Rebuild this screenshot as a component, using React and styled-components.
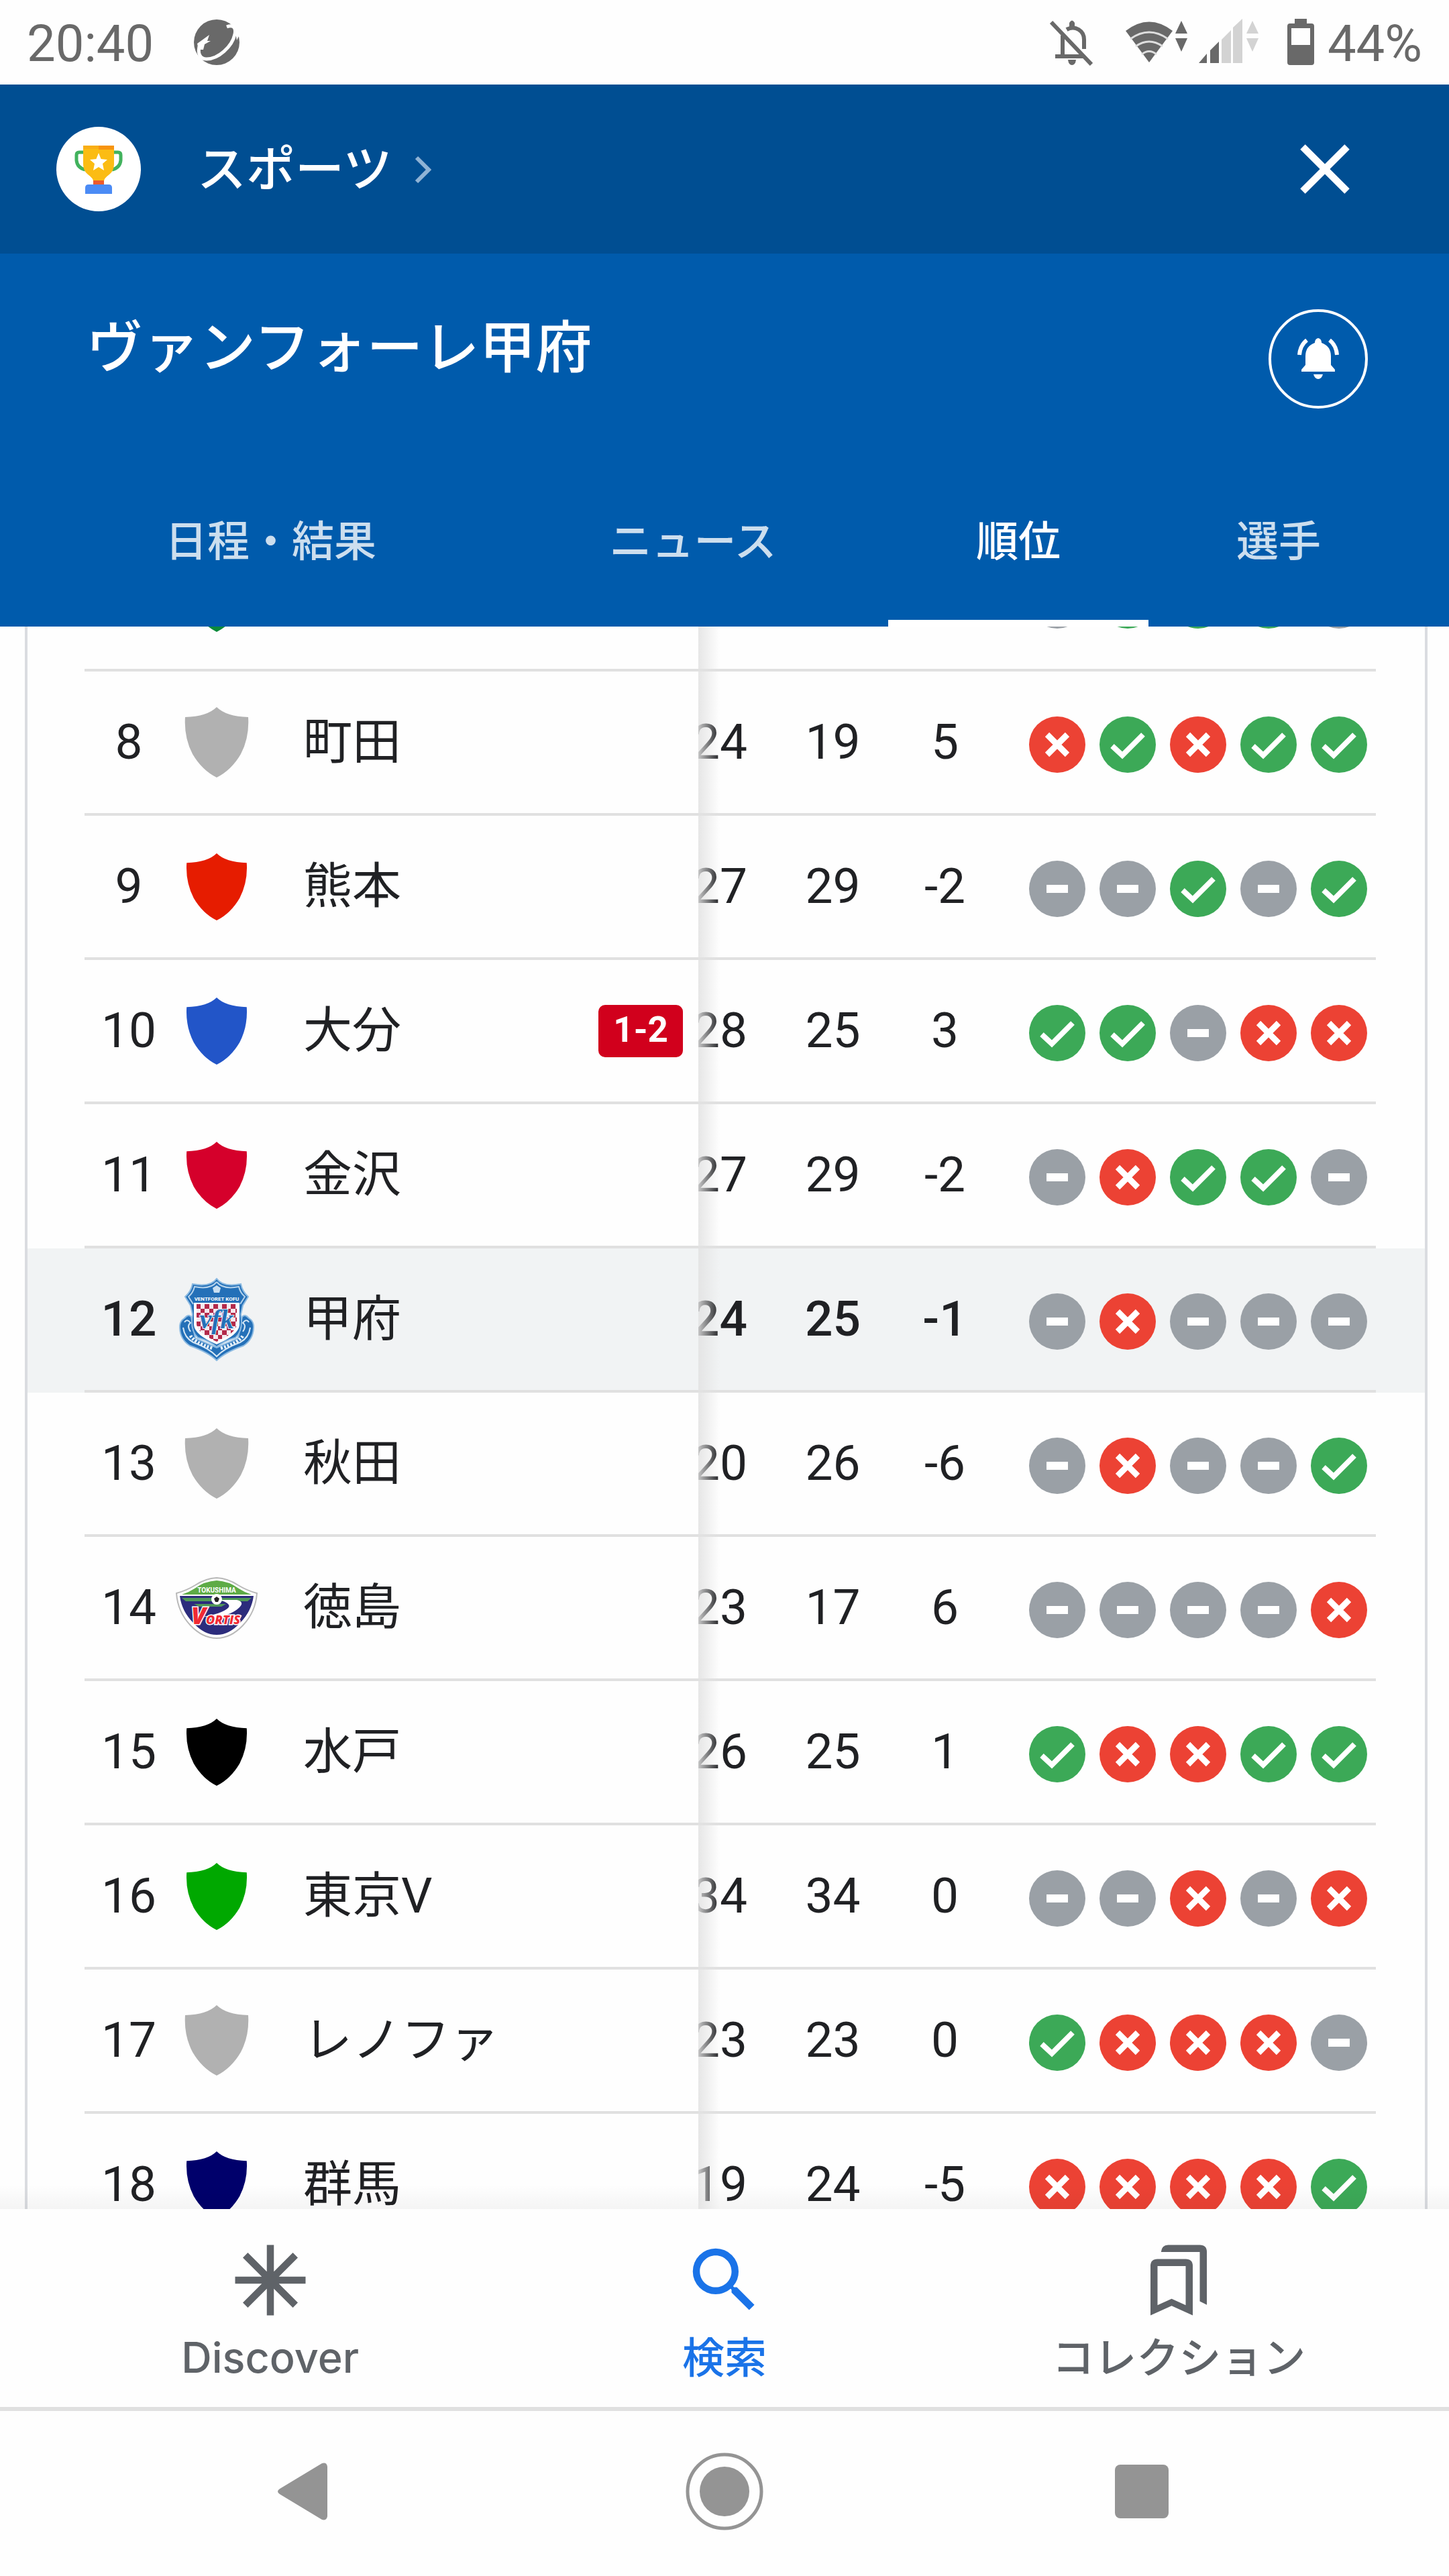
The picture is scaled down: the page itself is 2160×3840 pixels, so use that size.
import styled, { createGlobalStyle } from "styled-components";
import { MdClose, MdSearch } from "react-icons/md";

const standings = [
  { shield: "#0b8a3a", form: "DWWWD" },
  { rank: 8, name: "町田", shield: "#b1b1b1", large: true, gf: 24, ga: 19, gd: 5, form: "LWLWW" },
  { rank: 9, name: "熊本", shield: "#e61c00", gf: 27, ga: 29, gd: -2, form: "DDWDW" },
  { rank: 10, name: "大分", shield: "#2255c8", gf: 28, ga: 25, gd: 3, form: "WWDLL", live: "1-2" },
  { rank: 11, name: "金沢", shield: "#d5002b", gf: 27, ga: 29, gd: -2, form: "DLWWD" },
  { rank: 12, name: "甲府", crest: "kofu", gf: 24, ga: 25, gd: -1, form: "DLDDD", current: true },
  { rank: 13, name: "秋田", shield: "#b1b1b1", large: true, gf: 20, ga: 26, gd: -6, form: "DLDDW" },
  { rank: 14, name: "徳島", crest: "tokushima", gf: 23, ga: 17, gd: 6, form: "DDDDL" },
  { rank: 15, name: "水戸", shield: "#000000", gf: 26, ga: 25, gd: 1, form: "WLLWW" },
  { rank: 16, name: "東京V", shield: "#00a800", gf: 34, ga: 34, gd: 0, form: "DDLDL" },
  { rank: 17, name: "レノファ", shield: "#b1b1b1", large: true, gf: 23, ga: 23, gd: 0, form: "WLLLD" },
  { rank: 18, name: "群馬", shield: "#00006b", gf: 19, ga: 24, gd: -5, form: "LLLLW" },
];

const tabs = [
  { label: "日程・結果", grow: 677 },
  { label: "ニュース", grow: 582 },
  { label: "順位", grow: 388, active: true },
  { label: "選手", grow: 388 },
];

export default function App() {
  return (
    <>
      <GlobalStyle />
      <StyledScreen>
        <StatusBar />
        <StyledAppBar>
          <TrophyIcon />
          <StyledSportsLink href="#sports">
            スポーツ
            <svg width="28" height="42" viewBox="0 0 28 42" fill="none">
              <path d="M4 3 L22 21 L4 39" stroke="#8fb3d5" strokeWidth="6" />
            </svg>
          </StyledSportsLink>
          <StyledIconButton aria-label="閉じる">
            <MdClose size={126} />
          </StyledIconButton>
        </StyledAppBar>
        <StyledHero>
          <StyledHeroTop>
            <StyledTitle>ヴァンフォーレ甲府</StyledTitle>
            <StyledBellButton aria-label="通知">
              <BellIcon />
            </StyledBellButton>
          </StyledHeroTop>
          <StyledTabs>
            {tabs.map((tab) => (
              <StyledTab key={tab.label} $grow={tab.grow} $active={tab.active}>
                {tab.label}
              </StyledTab>
            ))}
          </StyledTabs>
        </StyledHero>
        <StyledContent>
          <StyledCard>
            <StyledTable>
              <tbody>
                {standings.map((team, index) => (
                  <TeamRow key={index} team={team} />
                ))}
              </tbody>
            </StyledTable>
          </StyledCard>
        </StyledContent>
        <StyledBottomNav>
          <StyledNavLink href="#discover">
            <DiscoverIcon />
            Discover
          </StyledNavLink>
          <StyledNavLink href="#search" $active>
            <MdSearch size={126} />
            検索
          </StyledNavLink>
          <StyledNavLink href="#collections">
            <CollectionsIcon />
            コレクション
          </StyledNavLink>
        </StyledBottomNav>
        <SystemNav />
      </StyledScreen>
    </>
  );
}

function TeamRow({ team }) {
  return (
    <StyledRow $current={team.current}>
      <StyledCell>{team.rank}</StyledCell>
      <StyledTeamCell scope="row">
        <StyledLogo>
          {team.crest === "kofu" && <KofuCrest />}
          {team.crest === "tokushima" && <TokushimaCrest />}
          {team.shield && <Shield color={team.shield} large={team.large} />}
        </StyledLogo>
        <StyledName>{team.name}</StyledName>
        {team.live && <StyledLiveScore>{team.live}</StyledLiveScore>}
      </StyledTeamCell>
      <StyledScrolledCell>{team.gf}</StyledScrolledCell>
      <StyledCell>{team.ga}</StyledCell>
      <StyledCell>{team.gd}</StyledCell>
      <StyledFormCell>
        {team.form.split("").map((result, index) => (
          <FormIcon key={index} result={result} />
        ))}
      </StyledFormCell>
    </StyledRow>
  );
}

function StatusBar() {
  return (
    <StyledStatusBar>
      <StyledStatusText>20:40</StyledStatusText>
      <StyledStatusIcon width="70" height="70" viewBox="0 0 70 70" $before={59}>
        <circle cx="35" cy="35" r="34" fill="#696969" />
        <path
          d="M50 12 C60 8 64 14 62 23 C58 42 37 60 20 60 C9 60 6 50 10 38"
          fill="none"
          stroke="#fff"
          strokeWidth="5"
        />
        <path d="M6 37 L24 24 L21 33 L26 33 L17 38 L15 46 L8 46 Z" fill="#fff" />
        <path d="M56 6 L70 22 L65 32 L62 16 Z" fill="#fff" />
      </StyledStatusIcon>
      <StyledSpacer />
      <StyledStatusIcon width="64" height="70" viewBox="0 0 64 70" fill="none" stroke="#696969" strokeWidth="6" $before={0}>
        <path d="M25 16 C38 9 51 18 51 31 V45" />
        <path d="M19 25 V54 M8 56 H52 M2 5 L62 68" />
        <path d="M29 13 V6 Q33 -1 37 6 V13 Z M27 61 H39 Q38 69 33 69 Q28 69 27 61 Z" fill="#696969" stroke="none" />
      </StyledStatusIcon>
      <StyledStatusIcon width="92" height="70" viewBox="0 0 92 70" fill="none" $before={49}>
        <path d="M35 65 L0 18 Q35 -9 70 18 Z" fill="#696969" />
        <path
          d="M7 30 Q35 10 63 30 M15 41 Q35 27 55 41 M24 53 Q35 44 46 53"
          stroke="#dedede"
          strokeWidth="3"
        />
        <path d="M83 3 L92 22 H74 Z M83 49 L92 29 H74 Z" fill="#696969" />
      </StyledStatusIcon>
      <StyledStatusIcon width="90" height="70" viewBox="0 0 90 70" $before={17}>
        <path d="M0 66 L12 52 V66 Z M17 47 L30 34 V66 H17 Z" fill="#696969" />
        <path
          d="M34 31 L48 17 V66 H34 Z M51 13 L65 0 V66 H51 Z M80 3 L89 22 H71 Z M80 49 L89 29 H71 Z"
          fill="#d3d3d3"
        />
      </StyledStatusIcon>
      <StyledStatusIcon width="40" height="70" viewBox="0 0 40 70" $before={42}>
        <path
          d="M11 0 H29 V7 H36 Q40 7 40 11 V65 Q40 69 36 69 H4 Q0 69 0 65 V11 Q0 7 4 7 H11 Z M6 14 V39 H34 V14 Z"
          fill="#696969"
          fillRule="evenodd"
        />
      </StyledStatusIcon>
      <StyledBattery>44%</StyledBattery>
    </StyledStatusBar>
  );
}

function TrophyIcon() {
  return (
    <svg width="126" height="126" viewBox="0 0 126 126">
      <circle cx="63" cy="63" r="63" fill="#fff" />
      <path
        d="M42 38 H34 Q30 38 30 42 V50 Q31 61 43 64 M84 38 H92 Q96 38 96 42 V50 Q95 61 83 64"
        fill="none"
        stroke="#41b25d"
        strokeWidth="5"
      />
      <path d="M40 28 H86 V55 Q86 66 79 71 Q71 77 71 81 V87 H55 V81 Q55 77 47 71 Q40 66 40 55 Z" fill="#fbbc13" />
      <path d="M40 28 H63 V33 H40 Z" fill="#f9ae16" />
      <path d="M63 28 H86 V34 H63 Z" fill="#f79410" />
      <path d="M55 80 H71 V87 H55 Z" fill="#ee5a2c" />
      <path d="M48 86 H78 Q83 86 83 91 V100 H43 V91 Q43 86 48 86 Z" fill="#4b8bf5" />
      <path
        d="M63 39 L66.600 48 L76 49 L69 55 L71 65 L63 60 L55 65 L57 55 L50 49 L59.400 48 Z"
        fill="#fff"
      />
    </svg>
  );
}

function BellIcon() {
  return (
    <svg width="64" height="62" viewBox="0 0 64 62" fill="#fff">
      <path d="M32 0 Q37 1 37 7 Q51 12 51 27 V40 L57 47 V50 H7 V47 L13 40 V27 Q13 12 27 7 Q27 1 32 0 Z" />
      <path d="M25 54 H39 Q37 61 32 61 Q27 61 25 54 Z" />
      <path d="M15 3 Q5 11 4 25 M49 3 Q59 11 60 25" fill="none" stroke="#fff" strokeWidth="6" />
    </svg>
  );
}

function DiscoverIcon() {
  return (
    <svg width="126" height="126" viewBox="0 0 24 24">
      <path
        d="M12 2 V22 M2 12 H22 M4.900 4.900 L19.100 19.100 M19.100 4.900 L4.900 19.100"
        stroke="currentColor"
        strokeWidth="2"
      />
    </svg>
  );
}

function CollectionsIcon() {
  return (
    <svg width="126" height="126" viewBox="0 0 24 24" fill="currentColor">
      <path
        d="M6 6 H14 Q16 6 16 8 V22 L10 19.300 L4 22 V8 Q4 6 6 6 Z M6 8 V19.100 L10 17.300 L14 19.100 V8 Z"
        fillRule="evenodd"
      />
      <path d="M7 4 Q7.200 2 9 2 H18 Q20 2 20 4 V19 L18 18 V4 Z" />
    </svg>
  );
}

function Shield({ color, large }) {
  return (
    <svg width={large ? 96 : 92} height={large ? 105 : 100} viewBox="0 0 96 105">
      <path
        d="M48 0 Q62 14 95 15 Q97 45 84 70 Q70 94 48 105 Q26 94 12 70 Q-1 45 1 15 Q34 14 48 0 Z"
        fill={color}
      />
    </svg>
  );
}

function KofuCrest() {
  return (
    <svg width="112" height="124" viewBox="0 0 112 124">
      <defs>
        <pattern id="checks" x="25" y="39" width="13" height="13" patternUnits="userSpaceOnUse">
          <rect width="13" height="13" fill="#f4e9ee" />
          <rect width="7" height="7" fill="#b32a4b" />
          <rect x="7" y="7" width="6" height="6" fill="#b32a4b" />
        </pattern>
      </defs>
      <path
        d="M18 58 Q14 53 8 60 Q0 65 1 75 Q2 92 16 101 Q44 111 56 123 Q68 111 96 101 Q110 92 111 75 Q112 65 104 60 Q98 53 94 58 L88 90 L56 104 L24 90 Z"
        fill="#2470b8"
        stroke="#8dbbe2"
        strokeWidth="2"
      />
      <path
        d="M6 74 Q8 89 21 96 Q45 105 56 117 Q67 105 91 96 Q104 89 106 74 M8 66 Q12 60 17 67 Q11 71 17 80 M104 66 Q100 60 95 67 Q101 71 95 80"
        fill="none"
        stroke="#d7e8f5"
        strokeWidth="2"
      />
      <path
        d="M56 1 Q65 14 92 9 Q94 20 103 28 L95 41 L92 54 Q96 78 84 89 Q66 94 56 103 Q46 94 28 89 Q16 78 20 54 L17 41 L9 28 Q18 20 20 9 Q47 14 56 1 Z"
        fill="#2470b8"
        stroke="#8dbbe2"
        strokeWidth="2"
      />
      <path
        d="M56 6 Q66 18 89 13 Q91 22 98 28 L91 39 M56 6 Q46 18 23 13 Q21 22 14 28 L21 39"
        fill="none"
        stroke="#b5d3ec"
        strokeWidth="2"
      />
      <path d="M22 37 H90 V70 Q89 85 56 99 Q23 85 22 70 Z" fill="#fff" />
      <path d="M26 39 H86 V69 Q85 82 56 95 Q27 82 26 69 Z" fill="url(#checks)" />
      <path d="M56 11 L62 15 L60 22 H52 L50 15 Z" fill="#c9dff1" />
      <StyledCrestText x="56" y="34" fontSize="8" fill="#fff">VENTFORET KOFU</StyledCrestText>
      <StyledScriptText x="56" y="75" fontSize="40">vfk</StyledScriptText>
      <path
        d="M17 86 Q22 96 50 105 M62 105 Q90 96 95 86"
        fill="none"
        stroke="#e3eff8"
        strokeWidth="5"
        strokeDasharray="3 2"
      />
    </svg>
  );
}

function TokushimaCrest() {
  return (
    <svg width="122" height="92" viewBox="0 0 122 92">
      <path
        d="M61 1 Q78 2 93 12 Q106 20 121 24 Q119 52 100 72 Q82 91 61 91 Q40 91 22 72 Q3 52 1 24 Q16 20 29 12 Q44 2 61 1 Z"
        fill="#fff"
        stroke="#b9b9b9"
        strokeWidth="2"
      />
      <path d="M6 28 H116 Q113 51 96 68 Q80 86 61 86 Q42 86 26 68 Q9 51 6 28 Z" fill="#2c2c7c" />
      <path d="M61 5 Q79 6 94 17 Q103 23 113 26 H9 Q19 23 28 17 Q43 6 61 5 Z" fill="#5eab46" />
      <path d="M9 31 H113 L107 36 H15 Z M27 40 H75 L68 44 H35 Z" fill="#4f9758" />
      <path d="M66 34 H91 Q103 37 95 45 Q84 56 60 60 L40 59 Q68 55 78 46 Q84 40 66 34 Z" fill="#fff" />
      <circle cx="61" cy="33" r="8" fill="#fff" />
      <path d="M61 29 L65 32 L63 37 H59 L57 32 Z" fill="#222" />
      <StyledCrestText x="61" y="23" fontSize="10" fill="#fff">TOKUSHIMA</StyledCrestText>
      <StyledVortisText x="45" y="70" fontSize="18">ORTIS</StyledVortisText>
      <StyledVortisText x="23" y="70" fontSize="36">V</StyledVortisText>
    </svg>
  );
}

function FormIcon({ result }) {
  return (
    <svg width="84" height="84" viewBox="0 0 84 84" fill="none" stroke="#fff">
      {result === "W" && (
        <>
          <circle cx="42" cy="42" r="42" fill="#3ca957" stroke="none" />
          <path d="M19 44 L34 58 L65 27" strokeWidth="8" />
        </>
      )}
      {result === "L" && (
        <>
          <circle cx="42" cy="42" r="42" fill="#ec4234" stroke="none" />
          <path d="M27 27 L57 57 M57 27 L27 57" strokeWidth="9" />
        </>
      )}
      {result === "D" && (
        <>
          <circle cx="42" cy="42" r="42" fill="#9aa0a6" stroke="none" />
          <path d="M26 42 H58" strokeWidth="12" />
        </>
      )}
    </svg>
  );
}

function SystemNav() {
  return (
    <StyledSystemNav>
      <StyledIconButton aria-label="戻る">
        <svg width="116" height="116" viewBox="0 0 116 116" fill="#949494">
          <path d="M80 16 Q87 14 88 21 V95 Q87 102 80 100 L17 62 Q11 58 17 54 Z" />
        </svg>
      </StyledIconButton>
      <StyledIconButton aria-label="ホーム">
        <svg width="116" height="116" viewBox="0 0 116 116">
          <circle cx="58" cy="58" r="55" fill="none" stroke="#949494" strokeWidth="5" />
          <circle cx="58" cy="58" r="37" fill="#949494" />
        </svg>
      </StyledIconButton>
      <StyledIconButton aria-label="アプリ履歴">
        <svg width="116" height="116" viewBox="0 0 116 116">
          <rect x="18" y="18" width="80" height="80" rx="8" fill="#949494" />
        </svg>
      </StyledIconButton>
    </StyledSystemNav>
  );
}

// Styling starts here

const GlobalStyle = createGlobalStyle`
  *,
  *::before,
  *::after {
    box-sizing: border-box;
  }
  body {
    margin: 0;
    background-color: #fefefe;
    color: #202124;
    font-family: Roboto, "Noto Sans CJK JP", sans-serif;
  }
  svg {
    display: block;
    flex-shrink: 0;
  }
  button {
    font-family: inherit;
  }
`;

const StyledScreen = styled.div`
  display: flex;
  flex-direction: column;
  height: 100vh;
`;

const StyledStatusBar = styled.header`
  display: flex;
  align-items: center;
  flex-shrink: 0;
  height: 126px;
  padding: 0 40px;
  color: #696969;
`;

const StyledStatusText = styled.span`
  padding-top: 4px;
  font-size: 76px;
  line-height: 88px;
`;

const StyledBattery = styled(StyledStatusText)`
  margin-left: 20px;
`;

const StyledStatusIcon = styled.svg`
  margin-left: ${({ $before }) => $before}px;
`;

const StyledSpacer = styled.div`
  flex: 1;
`;

const StyledAppBar = styled.nav`
  display: flex;
  align-items: center;
  flex-shrink: 0;
  height: 252px;
  padding: 0 122px 0 84px;
  background-color: #004e92;
  color: white;
`;

const StyledSportsLink = styled.a`
  display: flex;
  align-items: center;
  gap: 32px;
  margin-left: 84px;
  margin-right: auto;
  padding-top: 2px;
  color: white;
  font-size: 73px;
  font-weight: 500;
  line-height: 104px;
  text-decoration: none;
`;

const StyledIconButton = styled.button`
  padding: 0;
  border: none;
  background: none;
  color: inherit;
`;

const StyledHero = styled.section`
  flex-shrink: 0;
  padding-top: 83px;
  background-color: #005bac;
  color: white;
`;

const StyledHeroTop = styled.div`
  display: flex;
  justify-content: space-between;
  align-items: flex-start;
  margin-bottom: 73px;
  padding: 0 121px 0 129px;
`;

const StyledTitle = styled.h1`
  margin: 0;
  font-size: 84px;
  font-weight: 500;
  line-height: 118px;
`;

const StyledBellButton = styled.button`
  display: flex;
  justify-content: center;
  align-items: center;
  width: 148px;
  height: 148px;
  padding: 0;
  border: 4px solid white;
  border-radius: 50%;
  background: none;
`;

const StyledTabs = styled.div`
  display: flex;
  padding: 0 60px 0 65px;
`;

const StyledTab = styled.button`
  flex: ${({ $grow }) => $grow} 1 0;
  height: 252px;
  padding: 0;
  border: none;
  background: none;
  box-shadow: ${({ $active }) => ($active ? "inset 0 -10px white" : "none")};
  color: ${({ $active }) => ($active ? "white" : "#ccdeee")};
  font-size: 63px;
  font-weight: 500;
  line-height: 72px;
`;

const StyledContent = styled.main`
  position: relative;
  flex: 1;
  min-height: 0;
  overflow: hidden;
  &::after {
    content: "";
    position: absolute;
    right: 0;
    bottom: 0;
    left: 0;
    height: 36px;
    background: linear-gradient(transparent, rgba(0, 0, 0, 0.04));
  }
`;

const StyledCard = styled.div`
  margin: -148px 32px 0 37px;
  border: 4px solid #dadce0;
  border-width: 0 4px;
`;

const StyledTable = styled.table`
  display: block;
  border-spacing: 0;
  tbody {
    display: block;
  }
`;

const StyledRow = styled.tr`
  display: grid;
  grid-template-columns: 132px 1fr 117px 167px 167px 559px;
  height: 215px;
  padding: 0 73px 0 85px;
  background-color: ${({ $current }) => ($current ? "#f1f3f4" : "transparent")};
  font-size: 73px;
  font-weight: ${({ $current }) => ($current ? 500 : 400)};
  line-height: 96px;
`;

const StyledCell = styled.td`
  display: flex;
  justify-content: center;
  align-items: center;
  padding: 0 0 2px;
  border-bottom: 4px solid #e0e0e0;
`;

const StyledTeamCell = styled.th`
  position: relative;
  display: flex;
  align-items: center;
  padding: 0 23px 0 0;
  border-bottom: 4px solid #e0e0e0;
  font-weight: 400;
  // edge of the pinned columns
  &::after {
    content: "";
    position: absolute;
    top: 0;
    bottom: -4px;
    left: 100%;
    z-index: 1;
    width: 32px;
    background: linear-gradient(to right, rgba(226, 226, 226, 0.85), rgba(245, 245, 245, 0));
  }
`;

const StyledLogo = styled.div`
  display: flex;
  justify-content: center;
  width: 130px;
  margin-right: 64px;
`;

const StyledName = styled.span`
  margin-right: auto;
  padding-bottom: 2px;
`;

const StyledLiveScore = styled.span`
  padding: 0 22px 4px;
  border-radius: 10px;
  background-color: #d1001c;
  color: white;
  font-size: 53px;
  font-weight: 700;
  line-height: 74px;
`;

// partly scrolled under the pinned columns
const StyledScrolledCell = styled(StyledCell)`
  justify-content: flex-end;
  padding-right: 44px;
  overflow: hidden;
`;

const StyledFormCell = styled(StyledCell)`
  justify-content: flex-end;
  gap: 21px;
  padding: 7px 13px 0 0;
`;

const StyledCrestText = styled.text`
  font-family: Roboto, sans-serif;
  font-weight: 700;
  text-anchor: middle;
`;

const StyledScriptText = styled(StyledCrestText)`
  fill: #2470b8;
  stroke: #e3eff8;
  stroke-width: 2px;
  paint-order: stroke;
  font-family: "Liberation Serif", serif;
  font-style: italic;
`;

const StyledVortisText = styled.text`
  fill: #f02a34;
  stroke: white;
  stroke-width: 3px;
  paint-order: stroke;
  font-family: "Open Sans", sans-serif;
  font-style: italic;
  font-weight: 800;
`;

const StyledBottomNav = styled.nav`
  display: grid;
  grid-template-columns: repeat(3, 1fr);
  flex-shrink: 0;
  height: 301px;
  padding: 43px 64px 0;
  border-bottom: 6px solid #e0e0e0;
`;

const StyledNavLink = styled.a`
  display: flex;
  flex-direction: column;
  align-items: center;
  gap: 16px;
  color: ${({ $active }) => ($active ? "#1a73e8" : "#5f6368")};
  font-family: Inter, "Noto Sans CJK JP", sans-serif;
  font-size: 63px;
  font-weight: 500;
  line-height: 72px;
  text-decoration: none;
`;

const StyledSystemNav = styled.footer`
  display: grid;
  grid-template-columns: repeat(3, 1fr);
  justify-items: center;
  align-items: center;
  flex-shrink: 0;
  height: 246px;
  padding: 0 147px 6px;
`;
